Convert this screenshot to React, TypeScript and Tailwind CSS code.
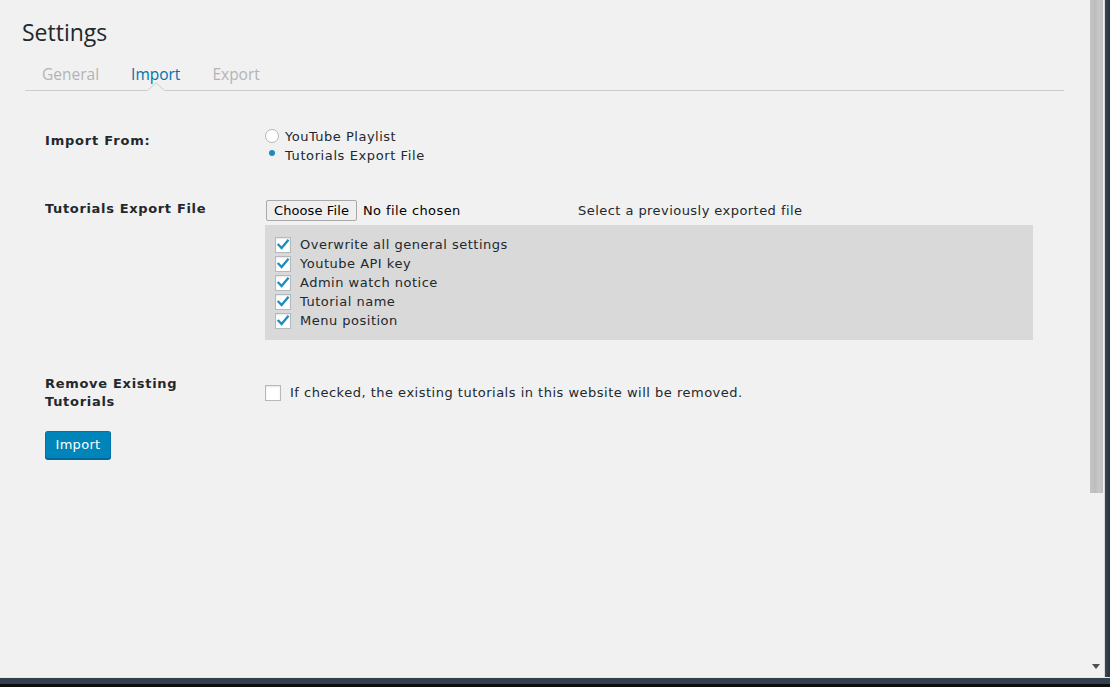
import React, { useState } from 'react';

const body = "font-['DejaVu_Sans',Verdana,sans-serif]";
const heading = "font-['Open_Sans',sans-serif]";

function CheckBox({ checked, onChange }: { checked: boolean; onChange: () => void }) {
  return (
    <button
      type="button"
      onClick={onChange}
      className="w-[16px] h-[16px] shrink-0 bg-white border border-[#b4b9be] shadow-[inset_0_1px_2px_rgba(0,0,0,0.1)] flex items-center justify-center"
    >
      {checked && (
        <svg width="14" height="14" viewBox="0 0 14 14">
          <path d="M2.5 6.8 L5.6 10 L11.8 2.6" fill="none" stroke="#1e8cbe" strokeWidth="2.3" strokeLinecap="square" />
        </svg>
      )}
    </button>
  );
}

const options = [
  'Overwrite all general settings',
  'Youtube API key',
  'Admin watch notice',
  'Tutorial name',
  'Menu position',
];

export default function App() {
  const [source, setSource] = useState<'youtube' | 'file'>('file');
  const [checks, setChecks] = useState(options.map(() => true));
  const [removeExisting, setRemoveExisting] = useState(false);

  return (
    <div className="w-[1110px] h-[687px] flex flex-col bg-[#111] overflow-hidden">
      <div className="flex flex-1 min-h-0">
        <main className={`flex-1 bg-[#f1f1f1] pl-[21px] pr-[24px] text-[#23282d] ${body}`}>
          <h1 className={`pt-[18px] pl-[1px] text-[23px] leading-[29px] font-normal text-[#23282d] ${heading}`}>Settings</h1>

          <nav className={`mt-[17px] ml-[4px] pl-[1px] flex border-b border-[#cccccc] text-[15.5px] leading-5 ${heading}`}>
            <a className="relative px-[16px] pb-[6px] text-[#b4b4b4]">General</a>
            <a className="relative px-[16px] pb-[6px] text-[#0073aa]">
              Import
              <svg className="absolute left-1/2 -translate-x-1/2 bottom-[-1px]" width="18" height="9" viewBox="0 0 18 9">
                <path d="M0 9 L9 0.5 L18 9 Z" fill="#f1f1f1" />
                <path d="M0.5 8.5 L9 0.8 L17.5 8.5" fill="none" stroke="#cccccc" strokeWidth="1" />
              </svg>
            </a>
            <a className="relative px-[16px] pb-[6px] text-[#b4b4b4]">Export</a>
          </nav>

          <div className="pl-[24px] pt-[36px] text-[13px] tracking-[0.5px]">
            {/* Import From */}
            <div className="flex">
              <div className="w-[220px] shrink-0 pt-[5px] font-bold leading-[17px] tracking-[0.8px]">Import From:</div>
              <div className="flex flex-col leading-[19px]">
                <label className="flex items-start gap-[6px] cursor-pointer" onClick={() => setSource('youtube')}>
                  <span className="mt-[2px] w-[14px] h-[14px] rounded-full bg-white border border-[#b4b9be] flex items-center justify-center">
                    {source === 'youtube' && <span className="w-[6px] h-[6px] rounded-full bg-[#1e8cbe]" />}
                  </span>
                  <span>YouTube Playlist</span>
                </label>
                <label className="flex items-start gap-[6px] cursor-pointer" onClick={() => setSource('file')}>
                  <span className="w-[14px] h-[14px] flex items-center justify-center">
                    {source === 'file' ? (
                      <span className="w-[6px] h-[6px] rounded-full bg-[#1e8cbe]" />
                    ) : (
                      <span className="w-[14px] h-[14px] rounded-full bg-white border border-[#b4b9be]" />
                    )}
                  </span>
                  <span className="tracking-[0.6px]">Tutorials Export File</span>
                </label>
              </div>
            </div>

            {/* Tutorials Export File */}
            <div className="flex mt-[35px]">
              <div className="w-[220px] shrink-0 font-bold leading-[17px] tracking-[0.65px]">Tutorials Export File</div>
              <div className="flex flex-col">
                <div className="flex items-center h-[21px]">
                  <div className="w-[313px] flex items-center">
                    <button className="ml-[1px] h-[21px] px-[7px] bg-[#efefef] border border-[#a9a9a9] rounded-[2px] text-black text-[13px] leading-[19px] tracking-[0.1px]">
                      Choose File
                    </button>
                    <span className="ml-[6px] text-black tracking-[0.4px]">No file chosen</span>
                  </div>
                  <span className="tracking-[0.45px]">Select a previously exported file</span>
                </div>
                <div className="mt-[4px] w-[768px] h-[115px] bg-[#d9d9d9] pl-[10px] pt-[10px] leading-[19px]">
                  {options.map((o, i) => (
                    <div key={o} className="flex items-center gap-[9px] h-[19px]">
                      <CheckBox
                        checked={checks[i]}
                        onChange={() => setChecks(checks.map((c, j) => (j === i ? !c : c)))}
                      />
                      <span>{o}</span>
                    </div>
                  ))}
                </div>
              </div>
            </div>

            {/* Remove Existing */}
            <div className="flex mt-[35px]">
              <div className="w-[220px] shrink-0 pr-[40px] font-bold leading-[18px] tracking-[0.7px]">Remove Existing Tutorials</div>
              <div className="flex items-center gap-[9px] mt-[10px] h-[16px]">
                <CheckBox checked={removeExisting} onChange={() => setRemoveExisting(!removeExisting)} />
                <span>If checked, the existing tutorials in this website will be removed.</span>
              </div>
            </div>

            <button className="mt-[20px] h-[28px] w-[66px] bg-[#0085ba] border border-[#0073aa] border-b-[#006799] rounded-[3px] text-white text-[13px] tracking-[0.3px] shadow-[0_1px_0_#006799]">
              Import
            </button>
          </div>
        </main>

        {/* scrollbar */}
        <div className="w-[17px] bg-[#f1f1f1] flex flex-col items-center border-r border-[#d8d8d8]">
          <div className="w-[13px] h-[493px] bg-[linear-gradient(90deg,#c4c4c4,#bdbdbd_40%,#c8c8c8_70%,#bfbfbf)]" />
          <div className="flex-1" />
          <svg className="mb-[8px]" width="8" height="5" viewBox="0 0 8 5">
            <path d="M0 0 L8 0 L4 5 Z" fill="#505050" />
          </svg>
        </div>
        <div className="w-[5px] bg-[linear-gradient(90deg,#3a4756,#263240)]" />
      </div>
      <div className="h-[1px] bg-[#e9e8dc]" />
      <div className="h-[6px] bg-[#343f4d]" />
      <div className="h-[3px] bg-[#0d0d0d]" />
    </div>
  );
}
